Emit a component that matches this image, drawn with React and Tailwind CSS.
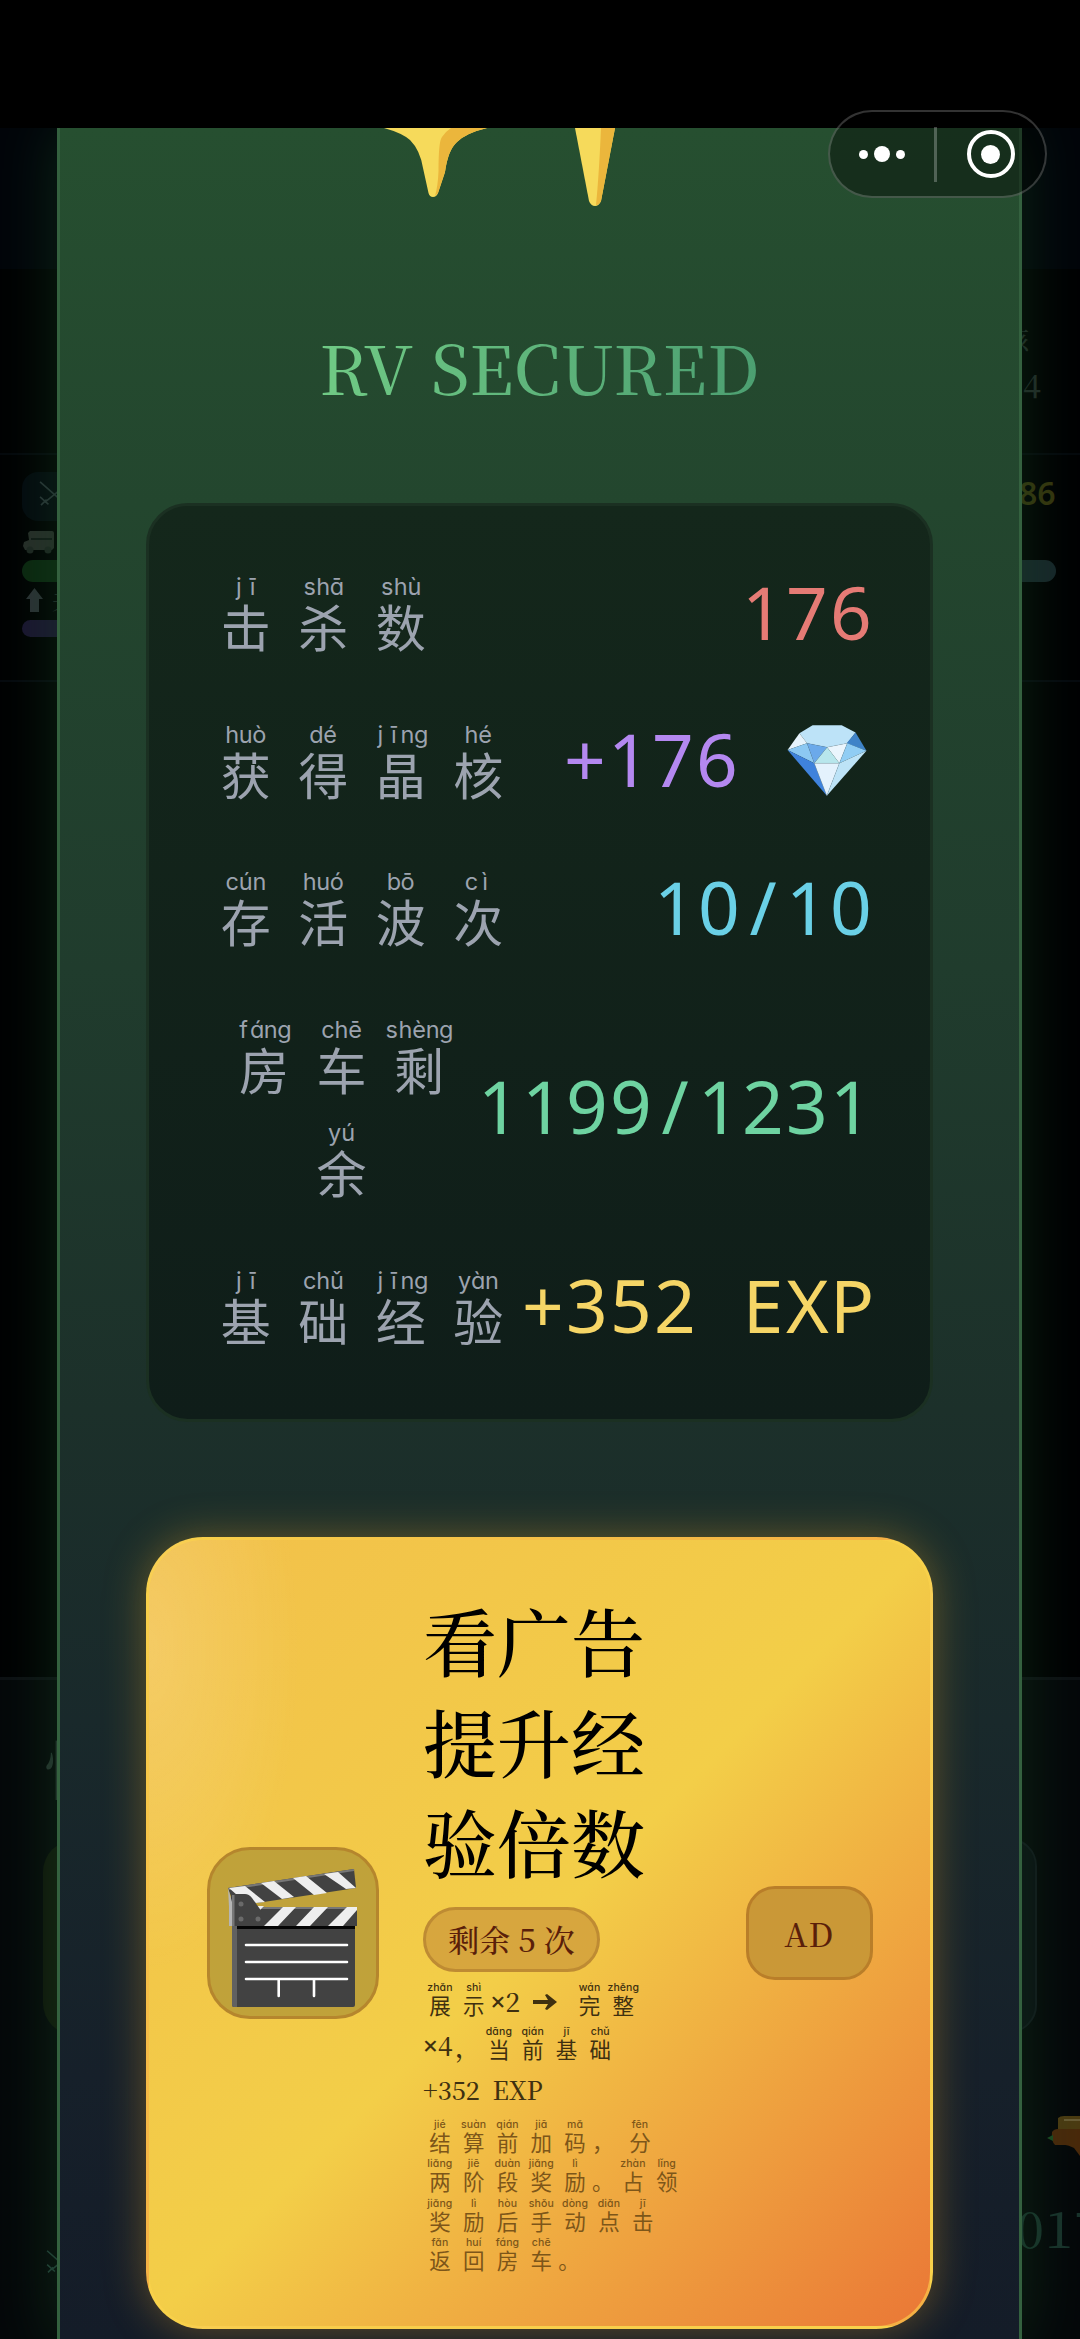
import React from "react";

const SERIF = "font-['Noto_Serif_CJK_SC','Source_Serif_4','Liberation_Serif','Noto_Sans_CJK_SC',serif] font-medium";

/* One hanzi with its pinyin reading on top. Large cells are used in the stats, small ones in the ad card. */
function LargeCell({ py, ch }) {
  return (
    <span className="flex h-[103.5px] min-w-[77.5px] flex-col items-center pt-[11px]">
      <span className="flex h-[30px] items-center font-['Inter','Noto_Sans',sans-serif] text-[23.5px] leading-[30px] [font-feature-settings:'cv11']">
        {[...py].map((c, i) => (
          <span key={i} className="flex w-[13.6px] justify-center">{c}</span>
        ))}
      </span>
      <span className="font-['Noto_Sans_CJK_SC',sans-serif] text-[50px] font-normal leading-[47px]">{ch}</span>
    </span>
  );
}

function SmallCell({ py, ch }) {
  return (
    <span className="flex w-[33.8px] flex-col items-center">
      <span className="h-[14px] whitespace-nowrap font-['Inter','Noto_Sans',sans-serif] text-[10.5px] font-medium leading-[15px] tracking-[0.1px] [font-feature-settings:'cv11']">{py}</span>
      <span className="font-['Noto_Sans_CJK_SC',sans-serif] text-[21.5px] font-normal leading-[22px]">{ch}</span>
    </span>
  );
}

function Mono({ text, className }) {
  return (
    <span className={`-mt-[2px] flex font-['Noto_Sans',sans-serif] text-[73px] leading-[98px] ${className}`}>
      {[...text].map((c, i) => (
        <span key={i} className="w-[44px] whitespace-pre pl-[2px] text-center">{c}</span>
      ))}
    </span>
  );
}

function Diamond() {
  return (
    <svg className="ml-[5px] mr-[5px] h-[71px] w-[80px]" viewBox="860 705 241 215" aria-hidden="true">
      <path fill="#bde3f8" d="M937 706h88l42 22-25 32-61 12-61-12-23-30z" />
      <path fill="#e6f3fc" d="M897 730l23 30-59 21z" />
      <path fill="#3f83c8" d="M1067 728l33 55-60-23z" />
      <path fill="#8cc8f2" d="M861 781l59-21 22 61z" />
      <path fill="#6ba9ea" d="M920 760l61 12-39 49z" />
      <path fill="#eaf5fd" d="M981 772l61-12-24 61z" />
      <path fill="#b8e6ec" d="M981 772l-39 49h76z" />
      <path fill="#90cdf4" d="M1042 760l58 23-82 38z" />
      <path fill="#3f82dc" d="M861 781l81 40 38 98z" />
      <path fill="#e4f2fd" d="M942 821h76l-38 98z" />
      <path fill="#bde3f7" d="M1100 783l-82 38-38 98z" />
      <path fill="none" stroke="#7aa3c0" strokeWidth="1" opacity=".6" d="M920 760l61 12 61-12M942 821h76M942 821l38 98 38-98M920 760l22 61M1042 760l-24 61" />
    </svg>
  );
}

function Clapper() {
  return (
    <svg className="h-[166px] w-[166px] shrink-0" viewBox="3 3 166 166" aria-hidden="true">
      <path fill="#424242" d="M25 77h123v81q0 2-2 2H27q-2 0-2-2z" />
      <path fill="#616161" d="M25 79h5v81h-3q-2 0-2-2z" />
      <path fill="#050505" d="M30 79h118v3H30z" />
      <path fill="#424242" d="M21 41L147 22l2 19-99 15-25-4z" />
      <path fill="#777" d="M21 41L147 22v2L22 43z" />
      <path fill="#eee" d="M22 41l16-2 20 16-9 1-19-8zM54 36l13-2 20 16-12 2zM86 31l13-2 21 17-13 2zM117 27l14-2 18 16-10 1z" />
      <path fill="#777" d="M54 60h96v2H54z" />
      <path fill="#424242" d="M50 62h100v17H50z" />
      <path fill="#eee" d="M76 60h13L71 79H57zM107 60h14l-18 19H89zM140 60h10v3l-14 16h-15zM47 59h10l-5 5z" />
      <path fill="#424242" d="M24 50l4-3h10q4 0 7 4l10 14v14H24z" />
      <path fill="#b5b5b5" d="M21 41l4 14v24h-3V60z" />
      <path fill="#777" d="M25 48h2.500v31H25z" />
      <g fill="#6a6a6a">
        <circle cx="34" cy="57" r="2.500" />
        <circle cx="34" cy="72" r="2.500" />
        <circle cx="51" cy="72" r="2.500" />
      </g>
      <path stroke="#fff" strokeWidth="2.600" strokeLinecap="round" fill="none" d="M39 98h101M39 115h101M39 132h101M71.700 132v17M107 132v17" />
    </svg>
  );
}

function Swords({ className }) {
  return (
    <svg className={className} viewBox="0 0 36 30" fill="none" stroke="currentColor" strokeWidth="1.800" aria-hidden="true">
      <path d="M2 2l25 22M34 2L7 24M2 18l9 8M3 27l6-6M34 18l-9 8M33 27l-6-6" />
    </svg>
  );
}

const stats = [
  { label: [["jī", "击"], ["shā", "杀"], ["shù", "数"]], value: "176", color: "text-[#e57b75]" },
  { label: [["huò", "获"], ["dé", "得"], ["jīng", "晶"], ["hé", "核"]], value: "+176 ", color: "text-[#b488f0]", gem: true },
  { label: [["cún", "存"], ["huó", "活"], ["bō", "波"], ["cì", "次"]], value: "10/10", color: "text-[#6ad0e6]" },
  { label: [["fáng", "房"], ["chē", "车"], ["shèng", "剩"], ["yú", "余"]], value: "1199/1231", color: "text-[#6ed3a1]" },
  { label: [["jī", "基"], ["chǔ", "础"], ["jīng", "经"], ["yàn", "验"]], value: "+352 EXP", color: "text-[#f5d566]" },
];

const notes = [
  [["jié", "结"], ["suàn", "算"], ["qián", "前"], ["jiā", "加"], ["mǎ", "码"], "，", ["fēn", "分"]],
  [["liǎng", "两"], ["jiē", "阶"], ["duàn", "段"], ["jiǎng", "奖"], ["lì", "励"], "。", ["zhàn", "占"], ["lǐng", "领"]],
  [["jiǎng", "奖"], ["lì", "励"], ["hòu", "后"], ["shǒu", "手"], ["dòng", "动"], ["diǎn", "点"], ["jī", "击"]],
  [["fǎn", "返"], ["huí", "回"], ["fáng", "房"], ["chē", "车"], "。"],
];

/* Dimmed game screen; only its edges show beside the result panel. */
function Backdrop() {
  return (
    <div className="absolute inset-x-0 bottom-0 top-[128px] overflow-hidden bg-[#010203]">
      <div className="absolute inset-x-0 top-0 h-[141px] bg-[#02050a]" />
      <div className="absolute inset-x-0 top-[325px] h-[2px] bg-[#05090d]" />
      <div className="absolute inset-x-0 top-[552px] h-[2px] bg-[#060a0f]" />
      <div className="absolute inset-x-0 bottom-0 top-[1549px] border-t-[3px] border-[#0d1114] bg-[#05080a]" />

      <div className="absolute left-[22px] top-[344px] h-[49px] w-[80px] rounded-2xl bg-[#040a0f]" />
      <Swords className="absolute left-[38px] top-[352px] h-[28px] w-[34px] text-[#2a3538]" />
      <svg className="absolute left-[23px] top-[403px] h-[23px] w-[32px]" viewBox="0 0 32 23" aria-hidden="true">
        <path fill="#272d29" d="M7 0h22q2 0 2 2v15l-2 2H2l-2-4 1-4 5-2-1-7z" />
        <path fill="#121a17" d="M8 7h21v2H8z" />
        <circle cx="7" cy="19" r="3.500" fill="#1e2622" />
        <circle cx="25" cy="19" r="3.500" fill="#1e2622" />
      </svg>
      <div className="absolute left-[22px] top-[432px] h-[22px] w-[80px] rounded-full bg-[#0b2710]" />
      <svg className="absolute left-[26px] top-[460px] h-[24px] w-[17px]" viewBox="0 0 17 24" aria-hidden="true">
        <path fill="#2b3135" d="M8.500 0L17 11h-4v13H4V11H0z" />
      </svg>
      <div className={`absolute left-[52px] top-[457px] text-[24px] leading-[28px] text-[#26302f] ${SERIF}`}>关</div>
      <div className="absolute left-[22px] top-[492px] h-[17px] w-[80px] rounded-full bg-[#1a1530]" />

      <div className={`absolute left-[1003px] top-[196px] text-[26px] leading-[28px] text-[#222b29] ${SERIF}`}>核</div>
      <div className={`absolute left-[1023px] top-[238px] text-[32px] leading-[36px] text-[#222b29] ${SERIF}`}>4</div>
      <div className="absolute left-[1019px] top-[346px] font-['Noto_Sans',sans-serif] text-[32px] font-semibold leading-[38px] text-[#36350e]">86</div>
      <div className="absolute left-[960px] top-[432px] h-[22px] w-[96px] rounded-full bg-[#17262a]" />

      <div className={`absolute left-[44px] top-[1603px] text-[64px] leading-[70px] text-[#26332f] ${SERIF}`}>悄</div>
      <div className="absolute left-[43px] top-[1712px] h-[195px] w-[100px] rounded-[32px] bg-[#10160b]" />
      <Swords className="absolute left-[44px] top-[2121px] h-[26px] w-[34px] text-[#24403a]" />

      <div className="absolute left-[900px] top-[1710px] h-[195px] w-[137px] rounded-[28px] border-2 border-[#12181d] bg-[#0a0f13]" />
      <svg className="absolute left-[1046px] top-[1988px] h-[44px] w-[34px]" viewBox="0 0 34 44" aria-hidden="true">
        <path fill="#4b3b12" d="M12 2q2-2 6-2h16v16H12z" />
        <path fill="#49290b" d="M6 16q2-3 6-3h22v27l-6-8q-6-3-9-3H9q-4-4-3-13z" />
        <path fill="#1b4a22" d="M1 22l6-3v6z" />
        <path stroke="#695c35" strokeWidth="2" d="M18 4h16" />
      </svg>
      <div className={`absolute left-[1016px] top-[2068px] text-[50px] leading-[60px] tracking-[1px] text-[#19332c] ${SERIF}`}>017</div>
    </div>
  );
}

function Sparkles() {
  return (
    <svg className="h-[80px] w-[240px]" viewBox="384 128 240 80" aria-hidden="true">
      <path fill="#f6da5b" d="M384 128q18 5 26 12 10 10 13 28l5.500 25q1 4 4.500 4t5-4l7-21q3-22 12-30 9-9 30-14z" />
      <path fill="#ebb63c" d="M451 128h36q-21 5-30 14-9 8-12 30l-7 21-3 3q3-10 3.500-25 0-30 3.500-34 3-5 9-9z" />
      <path fill="#f6da5b" d="M575 128h40l-14 73q-2 5-6 5t-6-5z" />
      <path fill="#ebb63c" d="M601 128h14l-14 73q-2 4-5 4 3-30 5-77z" />
    </svg>
  );
}

function AdCard() {
  return (
    <section className="mt-[115px] flex h-[792px] w-full items-center rounded-[57px] border-[3px] border-[#fcd34d]/60 bg-[radial-gradient(ellipse_150px_320px_at_0%_14%,rgba(255,255,255,0.15),transparent),linear-gradient(135deg,#f2c04a_0%,#f3ce48_50%,#ea7736_100%)] px-[58px] shadow-[0_0_42px_rgba(240,170,40,0.36)]">
      <div className="flex size-[172px] shrink-0 items-center justify-center rounded-[43px] border-[3px] border-[#b5862d] bg-[#c0a23a]">
        <Clapper />
      </div>

      <div className="ml-[44px] flex w-[279px] shrink-0 flex-col items-start">
        <h2 className={`-mt-[2px] w-[240px] text-[74px] leading-[100.400px] text-black ${SERIF}`}>看广告提升经验倍数</h2>
        <span className={`mt-[16px] flex h-[65px] w-[177px] items-center justify-center rounded-full border-[3px] border-[#be8b33] bg-[#d7a63e] text-[31px] text-[#5a1f0a] ${SERIF}`}>剩余 5 次</span>

        <div className={`mt-[8px] w-[280px] text-[26px] text-[#3f3010] ${SERIF}`}>
          <div className="flex h-[44px] items-start">
            <SmallCell py="zhǎn" ch="展" />
            <SmallCell py="shì" ch="示" />
            <span className="mt-[6px] flex w-[42px] leading-[30px]">
              <span className="w-[15px] font-['Noto_Sans',sans-serif] text-[26px]">×</span>2
            </span>
            <svg className="mr-[16px] mt-[14px] h-[16px] w-[24px]" viewBox="0 0 24 16" aria-hidden="true">
              <path fill="currentColor" d="M0 6h15L12 1l2-1 10 8-10 8-2-1 3-5H0z" />
            </svg>
            <SmallCell py="wán" ch="完" />
            <SmallCell py="zhěng" ch="整" />
          </div>
          <div className="flex h-[44px] items-start">
            <span className="mt-[6px] flex w-[32px] leading-[30px]">
              <span className="w-[15px] font-['Noto_Sans',sans-serif] text-[26px]">×</span>4
            </span>
            <span className="mt-[7px] w-[27px] leading-[30px]">，</span>
            <SmallCell py="dāng" ch="当" />
            <SmallCell py="qián" ch="前" />
            <SmallCell py="jī" ch="基" />
            <SmallCell py="chǔ" ch="础" />
          </div>
          <div className="h-[49px] whitespace-pre pt-[6px] text-[25px] leading-[30px]">+352  EXP</div>
        </div>

        <div className="text-[#7d5619]">
          {notes.map((line, i) => (
            <div key={i} className="flex h-[39.500px]">
              {line.map((c, j) =>
                typeof c === "string" ? (
                  <span key={j} className={`${c === "，" ? "w-[31px]" : "w-[24px]"} pt-[14px] font-['Noto_Sans_CJK_SC',sans-serif] text-[21.500px] leading-[22px]`}>{c}</span>
                ) : (
                  <SmallCell key={j} py={c[0]} ch={c[1]} />
                )
              )}
            </div>
          ))}
        </div>
      </div>

      <div className={`ml-[44px] flex h-[94px] w-[127px] shrink-0 items-center justify-center rounded-[29px] border-[3px] border-[#b97e29] bg-[#ca9837] text-[32px] tracking-[1.500px] text-[#5a1f0a] ${SERIF}`}>AD</div>
    </section>
  );
}

function Capsule() {
  return (
    <div className="absolute left-[828px] top-[110px] flex h-[88px] w-[219px] items-center rounded-full border-[2.500px] border-white/20 bg-black/40">
      <div className="flex w-[104px] items-center justify-center gap-[6px]">
        <i className="size-[9px] rounded-full bg-white" />
        <i className="size-[16px] rounded-full bg-white" />
        <i className="size-[9px] rounded-full bg-white" />
      </div>
      <div className="h-[55px] w-[2.500px] bg-white/25" />
      <div className="flex flex-1 items-center justify-center">
        <div className="flex size-[48px] items-center justify-center rounded-full border-[4px] border-white">
          <i className="size-[19px] rounded-full bg-white" />
        </div>
      </div>
    </div>
  );
}

export default function App() {
  return (
    <div className="relative h-[2339px] w-[1080px] overflow-hidden bg-black">
      <Backdrop />
      <div className="relative h-[128px]" />
      <main className="relative flex h-[2211px] overflow-hidden pl-[57px]">
        <div className="h-[2211px] w-[965px] shadow-[0_0_56px_rgba(24,78,38,0.45)]">
          <div className="flex h-full flex-col items-center border-x-[3px] border-[#34613f] bg-[linear-gradient(180deg,#264f30_0%,#23462e_17%,#203c2d_38%,#1c302a_58%,#19292b_72%,#16202a_88%,#141c28_100%)] px-[86px]">
            <div className="flex w-full pl-[238px]">
              <Sparkles />
            </div>
            <h1 className={`mt-[108px] h-[100px] whitespace-nowrap bg-gradient-to-r from-[#70ca85] to-[#4c9f71] bg-clip-text text-[67.500px] leading-[100px] tracking-[0.300px] text-transparent ${SERIF}`}>RV SECURED</h1>

            <section className="mt-[87px] flex h-[919px] w-full flex-col gap-[44px] rounded-[42px] border-[3px] border-[#1b3022] bg-[linear-gradient(180deg,#14271b,#0f1d19)] px-[58px] pt-[55px]">
              {stats.map((s) => (
                <div key={s.value} className="flex items-center justify-between">
                  <div className="flex flex-wrap justify-center text-[#9ca3af]">
                    {s.label.map(([py, ch]) => (
                      <LargeCell key={ch} py={py} ch={ch} />
                    ))}
                  </div>
                  <div className="flex shrink-0 items-center">
                    <Mono text={s.value} className={s.color} />
                    {s.gem && <Diamond />}
                  </div>
                </div>
              ))}
            </section>

            <AdCard />
          </div>
        </div>
      </main>
      <Capsule />
    </div>
  );
}
